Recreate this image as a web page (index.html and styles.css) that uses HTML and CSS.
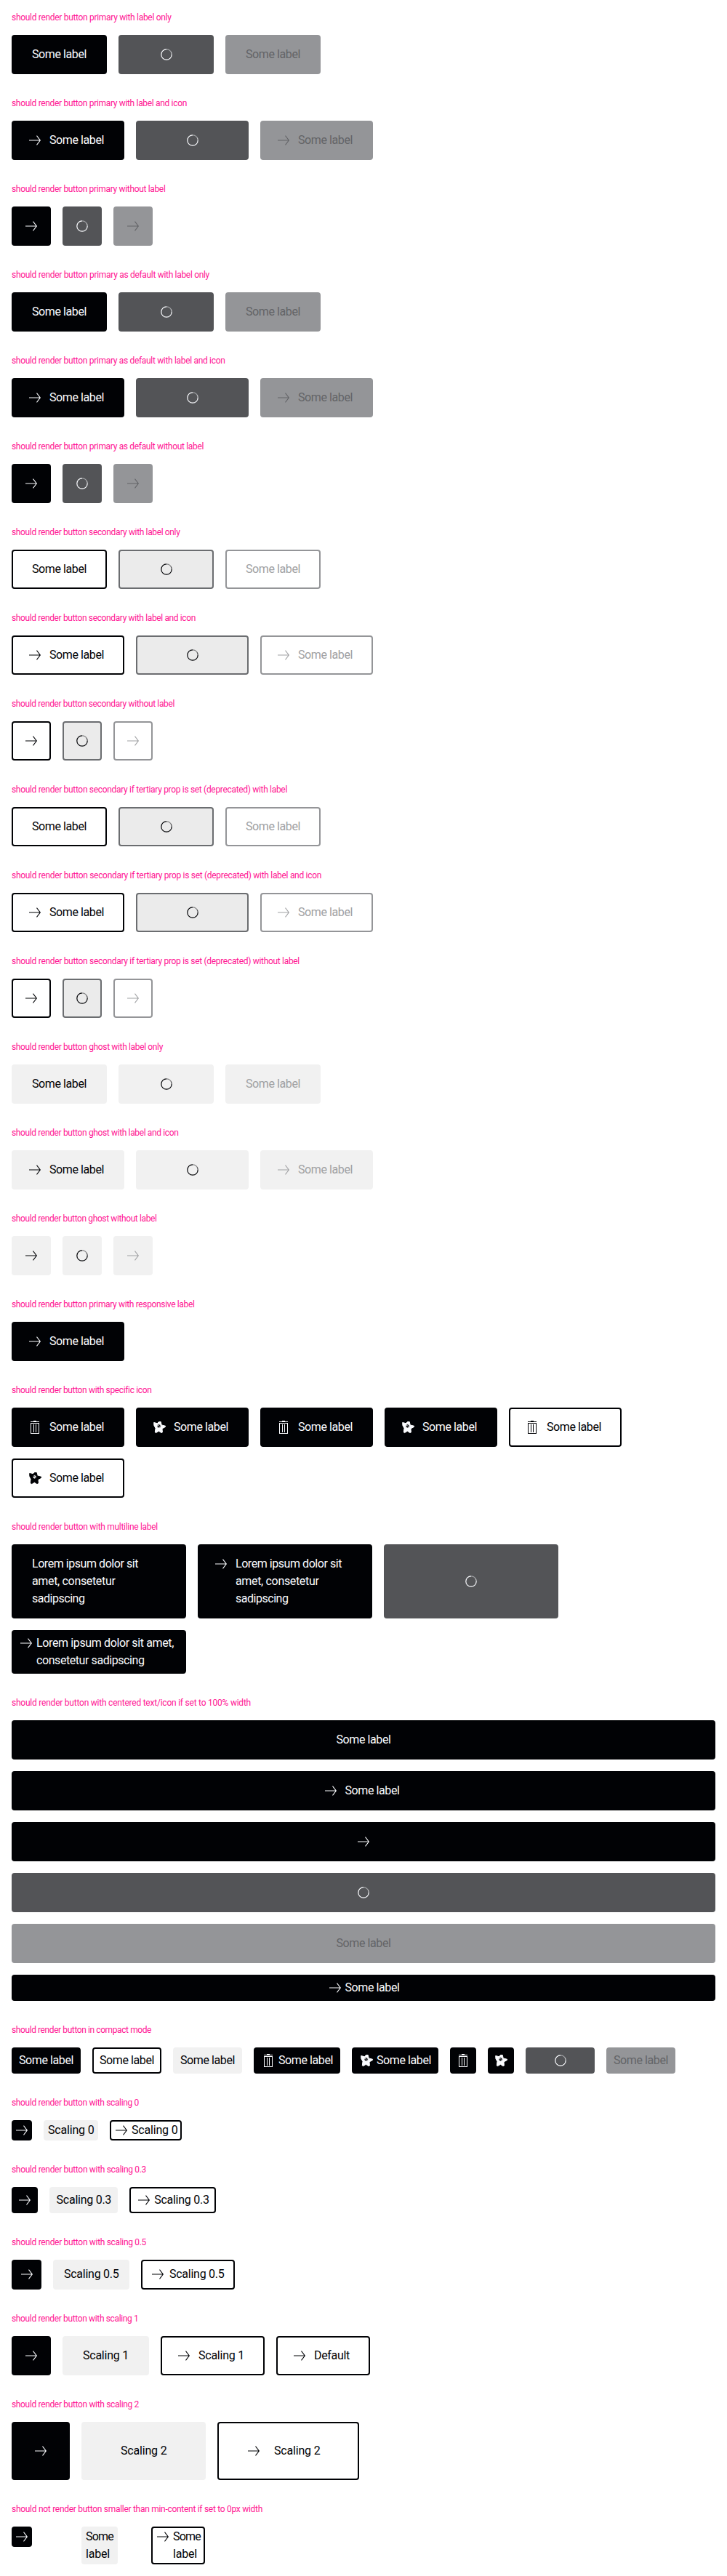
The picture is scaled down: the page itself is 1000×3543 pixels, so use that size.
FILE: index.html
```html
<!DOCTYPE html>
<html lang="en">
<head>
<meta charset="utf-8">
<title>Button</title>
<link rel="stylesheet" href="styles.css">
<script src="buttons.js" defer></script>
</head>
<body>
<main class="page" id="page"></main>
</body>
</html>
```
FILE: styles.css
```css
* { box-sizing: border-box; }

body {
  margin: 0;
  background: #fff;
  font-family: Roboto, sans-serif;
}

.page {
  display: flex;
  flex-direction: column;
  gap: 32px;
  padding: 16px;
}

.title {
  margin: 0 0 16px;
  font-size: 12px;
  line-height: 16px;
  font-weight: 400;
  color: #ff1493;
  white-space: nowrap;
}

.row {
  display: flex;
  flex-wrap: wrap;
  align-items: flex-start;
  gap: 16px;
}

.button {
  --pad-y: 13px;
  --pad-x: 26px;
  --gap: 8px;
  display: flex;
  justify-content: center;
  margin: 0;
  padding: var(--pad-y) var(--pad-x);
  border: 2px solid #010205;
  border-radius: 4px;
  background: #010205;
  color: #fbfcff;
  font: 400 16px/24px Roboto, sans-serif;
  text-align: left;
}

.icon {
  flex: none;
  display: block;
  width: 24px;
  height: 24px;
  fill: currentColor;
}

.button .icon + .label { margin-left: var(--gap); }
.button .icon:not(:last-child) { margin-left: calc(var(--gap) * -1); }
.button.only { --pad-x: var(--pad-y); }

.compact { --pad-y: 4px; --pad-x: 8px; --gap: 2px; }
.s0 { --pad-y: 0px; --pad-x: 4px; --gap: 2px; }
.s03 { --pad-y: 3.9px; --pad-x: 7.8px; --gap: 2.4px; }
.s05 { --pad-y: 6.5px; --pad-x: 13px; --gap: 4px; }
.s2 { --pad-y: 26px; --pad-x: 52px; --gap: 16px; }

.label {
  display: block;
  white-space: nowrap;
}
.label.some { width: 75px; }
.label.scaling { width: 63px; }
.label.scaling-long { width: 75px; }
.label.default { width: 49px; }
.label.narrow { width: 38px; }
.label.lorem { flex: 1; }

.secondary { background: #fff; color: #010205; }
.ghost { background: #f1f1f1; border-color: #f1f1f1; color: #010205; }

.primary.loading { background: #535457; border-color: #535457; }
.secondary.loading { background: #ebebeb; border-color: #6b6d70; }
.primary.disabled { background: #949598; border-color: #949598; color: #636467; }
.secondary.disabled { border-color: #949598; color: #a0a1a3; }
.ghost.disabled { color: #a0a1a3; }

.loading { align-items: center; }

.block { width: 240px; }
.tall { height: 102px; }
.full { width: 100%; }
.cell { width: 80px; display: flex; }
```
FILE: buttons.js
```js
const ICONS = {
  arrow: '<path d="M14.1 5.900 14.900 5.300 20 12 14.900 18.700 14.100 18.100 18.300 12.500H4v-1h14.300z"/>',
  trash: '<path d="M10 3h4v1h4v1H6V4h4zM6 6h12v15H6zm1 1v13h10V7zm3 1h1v11h-1zm3 0h1v11h-1z" fill-rule="evenodd"/>',
  star: '<path fill-rule="evenodd" stroke="currentColor" stroke-width="1" stroke-linejoin="round" d="M4.700 5.500 9.300 6.700 11.500 4.600 14.200 4.500 15.200 8.900 20.600 10.300 20.400 11.500 16 13.900 16.400 19 14.800 19.500 11.400 17.300 7.600 19.600 6.300 18.900 7 13.300 4.900 9.500ZM9 10.400a2.600 2.600 0 1 0 5.200 0a2.600 2.600 0 1 0-5.200 0Z"/><circle cx="10.900" cy="9.700" r=".7"/><circle cx="12.300" cy="10.900" r=".5"/>',
  spinner: '<g fill="none" stroke="currentColor" stroke-width="1.200"><path d="M12 4.800A7.200 7.200 0 0 1 18.200 8.400" stroke-opacity=".45"/><path d="M18.200 8.400A7.200 7.200 0 0 1 19.200 12" stroke-opacity=".7"/><path d="M19.200 12A7.200 7.200 0 1 1 12 4.800"/></g>'
};
const icon = name => `<svg class="icon" viewBox="0 0 24 24">${ICONS[name]}</svg>`;

const LINE_WIDTHS = {
  'Some label': 75, 'Some': 38, 'label': 33, 'Default': 49,
  'Scaling 0': 63.5, 'Scaling 0.3': 75.5, 'Scaling 0.5': 75.5, 'Scaling 1': 63, 'Scaling 2': 63.5,
  'Lorem ipsum dolor sit': 146, 'amet, consetetur': 114.5, 'sadipscing': 72.5,
  'Lorem ipsum dolor sit amet,': 189, 'consetetur sadipscing': 148.5
};

const line = text => `<span data-fit="${LINE_WIDTHS[text]}">${text}</span>`;

// Builds one button: classes, icon name, label text and label width class.
function button(classes, iconName, text, kind = 'some') {
  const parts = [];
  if (iconName) parts.push(icon(iconName));
  if (text) parts.push(`<span class="label ${kind}">${text.split('<br>').map(line).join('<br>')}</span>`);
  return `<button class="button ${classes}${text ? '' : ' only'}">${parts.join('')}</button>`;
}
function busy(classes, width) {
  return `<button class="button loading ${classes}" style="width:${width}px">${icon('spinner')}</button>`;
}

const L = 'Some label';
const sections = [];
const add = (title, width, ...items) => sections.push([title, width, items]);

for (const [name, kind, tails, widths] of [
  ['primary', 'primary', ['with label only', 'with label and icon', 'without label'], [219.5, 241, 211.5]],
  ['primary as default', 'primary', ['with label only', 'with label and icon', 'without label'], [272, 293.5, 264]],
  ['secondary', 'secondary', ['with label only', 'with label and icon', 'without label'], [231.5, 253, 224]],
  ['secondary if tertiary prop is set (deprecated)', 'secondary', ['with label', 'with label and icon', 'without label'], [379, 426, 396]],
  ['ghost', 'ghost', ['with label only', 'with label and icon', 'without label'], [208, 229.5, 199.5]]
]) {
  const t = `should render button ${name} `;
  add(t + tails[0], widths[0], button(kind, '', L), busy(kind, 131), button(kind + ' disabled', '', L));
  add(t + tails[1], widths[1], button(kind, 'arrow', L), busy(kind, 155), button(kind + ' disabled', 'arrow', L));
  add(t + tails[2], widths[2], button(kind, 'arrow'), busy(kind + ' only', 54), button(kind + ' disabled', 'arrow'));
}

add('should render button primary with responsive label', 251.5, button('primary', 'arrow', L));
add('should render button with specific icon', 192,
  button('primary', 'trash', L), button('primary', 'star', L),
  button('primary', 'trash', L), button('primary', 'star', L),
  button('secondary', 'trash', L), button('secondary', 'star', L));

const lorem = 'Lorem ipsum dolor sit<br>amet, consetetur<br>sadipscing';
add('should render button with multiline label', 201,
  button('primary block', '', lorem, 'lorem'), button('primary block', 'arrow', lorem, 'lorem'),
  `<button class="button primary loading block tall">${icon('spinner')}</button>`,
  button('primary block compact', 'arrow', 'Lorem ipsum dolor sit amet,<br>consetetur sadipscing', 'lorem'));

add('should render button with centered text/icon if set to 100% width', 329,
  button('primary full', '', L), button('primary full', 'arrow', L), button('primary full', 'arrow'),
  `<button class="button primary loading full">${icon('spinner')}</button>`,
  button('primary full disabled', '', L), button('primary full compact', 'arrow', L));

add('should render button in compact mode', 192,
  button('primary compact', '', L), button('secondary compact', '', L), button('ghost compact', '', L),
  button('primary compact', 'trash', L), button('primary compact', 'star', L),
  button('primary compact', 'trash'), button('primary compact', 'star'),
  busy('primary compact', 95), button('primary compact disabled', '', L));

for (const [cls, n, kind, width] of [
  ['s0', '0', 'scaling', 175], ['s03', '0.3', 'scaling-long', 185], ['s05', '0.5', 'scaling-long', 185],
  ['s1', '1', 'scaling', 174.5], ['s2', '2', 'scaling', 175]
]) {
  const items = [
    button('primary ' + cls, 'arrow'),
    button('ghost ' + cls, '', 'Scaling ' + n, kind),
    button('secondary ' + cls, 'arrow', 'Scaling ' + n, kind)
  ];
  if (n === '1') items.push(button('secondary', 'arrow', 'Default', 'default'));
  add('should render button with scaling ' + n, width, ...items);
}

add('should not render button smaller than min-content if set to 0px width', 345,
  ...[button('primary s0', 'arrow'), button('ghost s0', '', 'Some<br>label', 'narrow'), button('secondary s0', 'arrow', 'Some<br>label', 'narrow')]
    .map(b => `<div class="cell">${b}</div>`));

document.getElementById('page').innerHTML = sections
  .map(([title, width, items]) => `<section><h2 class="title"><span data-fit="${width}">${title}</span></h2><div class="row">${items.join('')}</div></section>`)
  .join('');

// Tracks each line so that it takes its intended width.
const spans = [...document.querySelectorAll('[data-fit]')];
const spacing = spans.map(s => (Number(s.dataset.fit) - s.getBoundingClientRect().width) / s.textContent.length);
spans.forEach((s, i) => { s.style.letterSpacing = spacing[i].toFixed(3) + 'px'; });
```
